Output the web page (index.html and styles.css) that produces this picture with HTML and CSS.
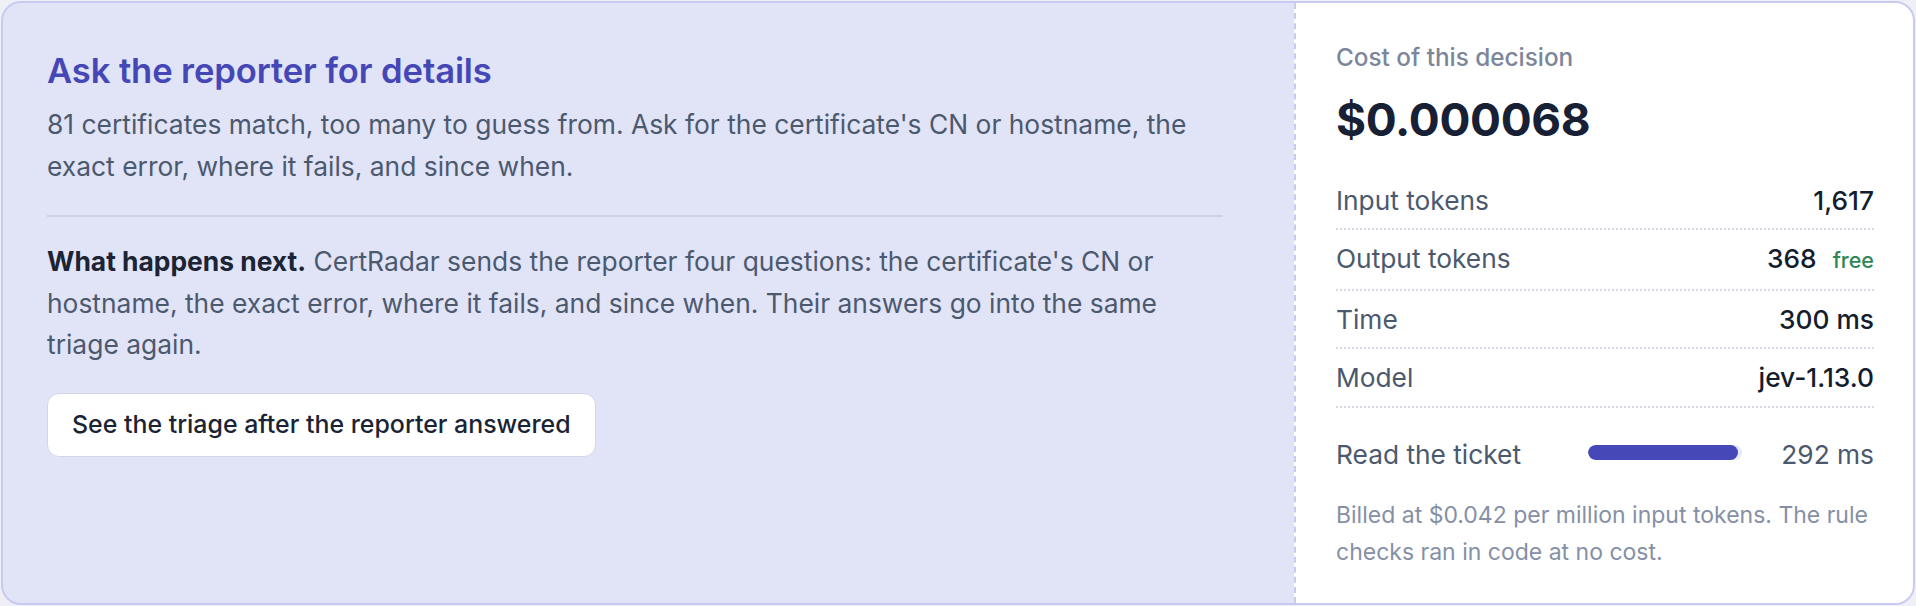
FILE: index.html
```html
<!DOCTYPE html>
<html lang="en">
<head>
<meta charset="utf-8">
<title>Triage decision</title>
<link rel="stylesheet" href="styles.css">
</head>
<body>
<div class="card">
  <section class="main">
    <h2 class="title">Ask the reporter for details</h2>
    <p class="lead">81 certificates match, too many to guess from. Ask for the certificate's CN or hostname, the exact error, where it fails, and since when.</p>
    <div class="next">
      <p class="next-text"><strong>What happens next.</strong> CertRadar sends the reporter four questions: the certificate's CN or hostname, the exact error, where it fails, and since when. Their answers go into the same triage again.</p>
      <button class="btn" type="button">See the triage after the reporter answered</button>
    </div>
  </section>
  <aside class="cost">
    <div class="cost-label">Cost of this decision</div>
    <div class="cost-value">$0.000068</div>
    <dl class="stats">
      <div class="stat"><dt>Input tokens</dt><dd>1,617</dd></div>
      <div class="stat"><dt>Output tokens</dt><dd>368 <span class="free">free</span></dd></div>
      <div class="stat"><dt>Time</dt><dd>300 ms</dd></div>
      <div class="stat"><dt>Model</dt><dd>jev-1.13.0</dd></div>
    </dl>
    <div class="timing">
      <span class="timing-label">Read the ticket</span>
      <div class="track"><div class="fill" style="width:97.3%"></div></div>
      <span class="timing-value">292 ms</span>
    </div>
    <p class="note">Billed at $0.042 per million input tokens. The rule checks ran in code at no cost.</p>
  </aside>
</div>
</body>
</html>
```
FILE: styles.css
```css
* { box-sizing: border-box; }

html, body {
  margin: 0;
  height: 100%;
}

body {
  padding: 1px;
  background: #eef0f5;
  font-family: Inter, "Noto Sans", sans-serif;
  color: #475569;
}

.card {
  height: 100%;
  display: grid;
  grid-template-columns: 1fr 619px;
  background: #e1e3f7;
  border: 2px solid #c8cbf1;
  border-radius: 20px;
  overflow: hidden;
}

/* left column */
.main {
  padding: 45px 71px 0 44px;
}

.title {
  margin: 0;
  font-size: 34.6px;
  line-height: 44px;
  font-weight: 600;
  color: #4547b6;
  letter-spacing: -0.1px;
}

.lead {
  margin: 12px 0 0;
  font-size: 26.4px;
  line-height: 41.5px;
  color: #4b596e;
}

.next {
  margin-top: 28px;
  border-top: 2px solid #ced1e6;
  padding-top: 24px;
}

.next-text {
  margin: 0;
  font-size: 26.4px;
  line-height: 41.5px;
  color: #4b596e;
}

.next-text strong {
  font-weight: 700;
  color: #1b2435;
}

.btn {
  display: block;
  margin-top: 27px;
  padding: 14.5px 24px;
  background: #ffffff;
  border: 1.5px solid #d3d6e6;
  border-radius: 12px;
  font-family: inherit;
  font-size: 24.9px;
  line-height: 33.6px;
  font-weight: 500;
  color: #1b2435;
  cursor: pointer;
}

/* right column */
.cost {
  background: #ffffff;
  border-left: 2px dashed #c9cce9;
  padding: 37px 39px 0 40px;
}

.cost-label {
  font-size: 24.3px;
  line-height: 34px;
  font-weight: 500;
  color: #7b869b;
}

.cost-value {
  margin-top: 18px;
  font-size: 45.9px;
  line-height: 56px;
  font-weight: 700;
  color: #172034;
  letter-spacing: -0.3px;
}

.stats {
  margin: 23.5px 0 0;
}

.stat {
  display: flex;
  justify-content: space-between;
  align-items: baseline;
  padding: 8px 0 7px;
  border-bottom: 2px dotted #d5dae3;
  font-size: 26.3px;
  line-height: 41.5px;
}

.stat dt {
  color: #4b596e;
}

.stat dd {
  margin: 0;
  font-weight: 500;
  color: #141d2e;
}

.free {
  margin-left: 9px;
  font-size: 21.5px;
  font-weight: 500;
  color: #2f8656;
}

.timing {
  margin-top: 26px;
  display: grid;
  grid-template-columns: 252px 154px 1fr;
  align-items: center;
  font-size: 26.3px;
  line-height: 41.5px;
}

.timing-label {
  color: #4b596e;
}

.track {
  height: 15px;
  border-radius: 8px;
  background: #e8eaf2;
  overflow: hidden;
  margin-top: -4px;
}

.fill {
  height: 100%;
  border-radius: 8px;
  background: #4648b8;
}

.timing-value {
  text-align: right;
  color: #4b596e;
}

.note {
  margin: 22px 0 0;
  font-size: 23px;
  line-height: 36.6px;
  color: #8590a6;
}
```
